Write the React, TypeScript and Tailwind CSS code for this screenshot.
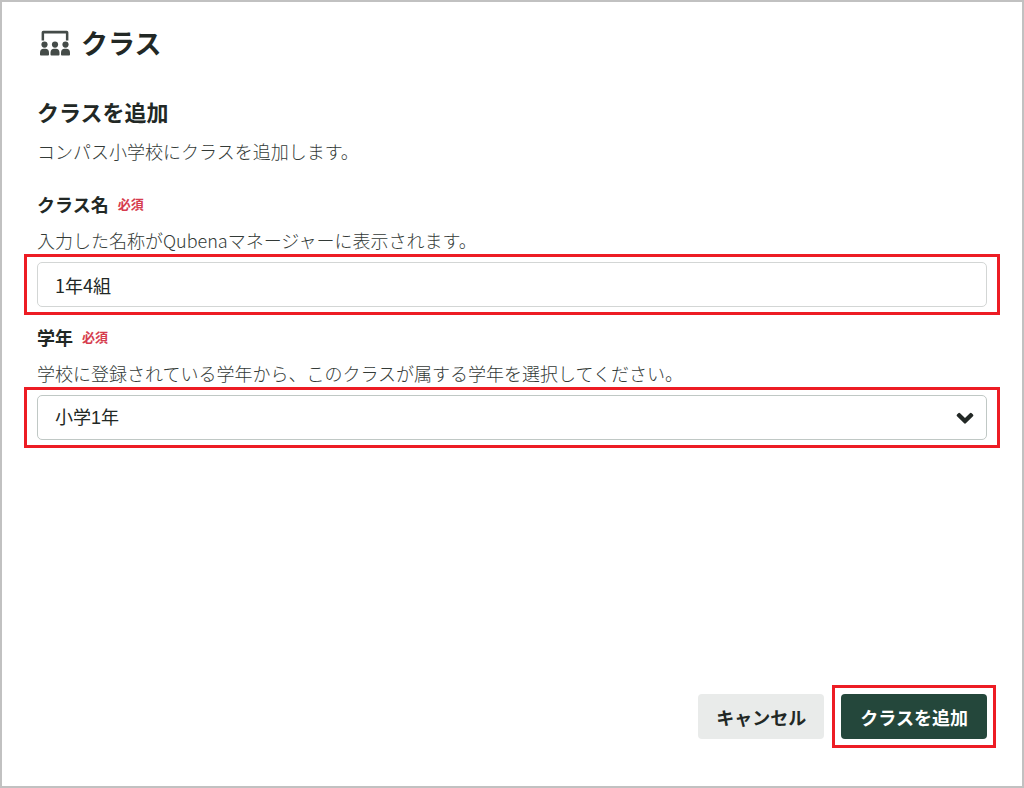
import { useState } from "react";
import type { ReactNode } from "react";

const grades = ["小学1年", "小学2年", "小学3年", "小学4年", "小学5年", "小学6年"];

function ClassIcon() {
  return (
    <svg width="30" height="26" viewBox="0 0 30 26" fill="#444b48" aria-hidden="true">
      <path d="M3.2 0.8h23.6a1.6 1.6 0 0 1 1.6 1.6v8h-2.5V3.4H4.1v7H1.6v-8A1.6 1.6 0 0 1 3.2.8z" />
      {[4.5, 15, 25.5].map((x) => (
        <g key={x} transform={`translate(${x} 0)`}>
          <circle cx="0" cy="14.6" r="3.1" />
          <path d="M-4.5 24.6v-1.8c0-2.4 1.4-4 3.5-4h2c2.1 0 3.5 1.6 3.5 4v1.8a.9.9 0 0 1-.9.9h-7.2a.9.9 0 0 1-.9-.9z" />
        </g>
      ))}
    </svg>
  );
}

type FieldProps = {
  id: string;
  label: string;
  hint: string;
  children: ReactNode;
};

function Field({ id, label, hint, children }: FieldProps) {
  return (
    <div>
      <div className="flex items-center gap-[9px] leading-7">
        <label htmlFor={id} className="text-lg leading-7 font-bold">
          {label}
        </label>
        <span className="text-[13px] leading-7 font-bold text-[#d63c4e]">必須</span>
      </div>
      <p className="mt-2 text-lg leading-7 font-light text-[#333a37]">{hint}</p>
      <div className="-mx-[13px] border-3 border-[#ed1c24] px-[10px] py-[5px]">
        {children}
      </div>
    </div>
  );
}

export default function App() {
  const [className, setClassName] = useState("1年4組");
  const [grade, setGrade] = useState(grades[0]);

  return (
    <main className="flex min-h-screen flex-col border-2 border-[#c1c1c1] bg-white px-[35px] pt-[23px] pb-[38px] font-['Noto_Sans_CJK_JP',sans-serif] text-[#222825]">
      <h1 className="flex items-center gap-[11px] pl-[3px] text-[27px] leading-9 font-bold">
        <ClassIcon />
        クラス
      </h1>

      <form className="flex grow flex-col" onSubmit={(e) => e.preventDefault()}>
        <h2 className="mt-[34px] text-[22px] leading-8 font-bold">クラスを追加</h2>
        <p className="mt-[10px] text-lg leading-7 font-light text-[#333a37]">
          コンパス小学校にクラスを追加します。
        </p>

        <div className="mt-[25px] mb-10 flex flex-col gap-2">
          <Field
            id="class-name"
            label="クラス名"
            hint="入力した名称がQubenaマネージャーに表示されます。"
          >
            <input
              id="class-name"
              type="text"
              value={className}
              onChange={(e) => setClassName(e.target.value)}
              className="block h-[45px] w-full rounded-[5px] border border-[#d3d6d5] px-[17px] text-lg"
            />
          </Field>

          <Field
            id="grade"
            label="学年"
            hint="学校に登録されている学年から、このクラスが属する学年を選択してください。"
          >
            <div className="relative">
              <select
                id="grade"
                value={grade}
                onChange={(e) => setGrade(e.target.value)}
                className="block h-[45px] w-full appearance-none rounded-[5px] border border-[#c0c8c5] bg-white px-[17px] font-['Liberation_Sans','Noto_Sans_CJK_JP',sans-serif] text-lg"
              >
                {grades.map((g) => (
                  <option key={g}>{g}</option>
                ))}
              </select>
              <svg
                className="pointer-events-none absolute top-4 right-3"
                width="20"
                height="14"
                viewBox="0 0 20 14"
                fill="#222825"
                aria-hidden="true"
              >
                <path d="M8.9 12.1 2 5.3a1.3 1.3 0 0 1 0-1.8l1.3-1.3a1.3 1.3 0 0 1 1.8 0L10 7.1l4.9-4.9a1.3 1.3 0 0 1 1.8 0L18 3.5a1.3 1.3 0 0 1 0 1.8l-6.9 6.8a1.5 1.5 0 0 1-2.2 0z" />
              </svg>
            </div>
          </Field>
        </div>

        <div className="mt-auto -mr-[9px] flex items-center justify-end gap-2">
          <button
            type="button"
            className="h-[45px] rounded bg-[#e9ebea] px-[18px] text-lg leading-7 font-bold"
          >
            キャンセル
          </button>
          <div className="border-3 border-[#ed1c24] p-[6px]">
            <button
              type="submit"
              className="block h-[45px] rounded bg-[#24473b] px-[19px] text-lg leading-7 font-bold text-white"
            >
              クラスを追加
            </button>
          </div>
        </div>
      </form>
    </main>
  );
}
